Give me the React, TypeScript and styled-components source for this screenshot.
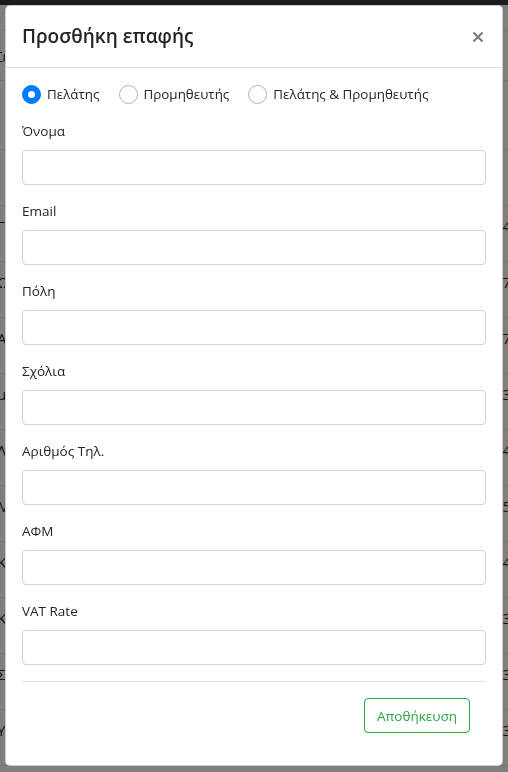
import React, { useState } from 'react';
import styled, { createGlobalStyle } from 'styled-components';

const GlobalStyle = createGlobalStyle`
  html, body {
    margin: 0;
    padding: 0;
    background: #fff;
    font-family: "Open Sans", "Noto Sans", sans-serif;
    color: #212529;
    overflow: hidden;
  }
  * { box-sizing: border-box; }
`;

const Page = styled.div`
  width: 508px;
  height: 772px;
  overflow: hidden;
  position: relative;
`;

const TopBar = styled.div`
  height: 5px;
  background: #343a40;
`;

const PageHead = styled.div`
  height: 51px;
  border-top: 1px solid #dee2e6;
  border-bottom: 1px solid #dee2e6;
  margin-top: 25px;
  display: flex;
  align-items: center;
  font-size: 15px;
  margin-left: -6px;
`;

const Table = styled.div`
  display: flex;
  flex-direction: column;
  margin-top: 68px;
  border-top: 1px solid #dee2e6;
`;

const Row = styled.div`
  height: 56px;
  border-bottom: 1px solid #dee2e6;
  display: flex;
  align-items: flex-start;
  justify-content: space-between;
  padding-top: 10px;
  font-size: 15px;
  line-height: 21px;
  color: #212529;
  margin-left: -3px;
  margin-right: -3px;
`;

const Backdrop = styled.div`
  position: fixed;
  inset: 0;
  background: rgba(0, 0, 0, 0.5);
`;

const Modal = styled.div`
  position: fixed;
  top: 5px;
  left: 5px;
  width: 498px;
  background: #fff;
  border: 1px solid rgba(0, 0, 0, 0.2);
  border-radius: 5px;
  display: flex;
  flex-direction: column;
`;

const Header = styled.div`
  display: flex;
  align-items: center;
  justify-content: space-between;
  padding: 16px;
  border-bottom: 1px solid #dee2e6;
`;

const Title = styled.h5`
  margin: 0;
  font-size: 19px;
  line-height: 29px;
  font-weight: 600;
  color: #212529;
`;

const Close = styled.button`
  border: 0;
  background: transparent;
  padding: 0;
  width: 16px;
  height: 16px;
  display: flex;
  align-items: center;
  justify-content: center;
  cursor: pointer;
`;

const Body = styled.div`
  padding: 16px;
`;

const RadioRow = styled.div`
  display: flex;
  align-items: center;
  gap: 19px;
  margin-bottom: 16px;
  height: 21px;
`;

const RadioLabel = styled.label`
  display: flex;
  align-items: center;
  gap: 6px;
  font-size: 13.4px;
  line-height: 21px;
  cursor: pointer;
`;

const RadioDot = styled.span<{ $checked: boolean }>`
  width: 19px;
  height: 19px;
  border-radius: 50%;
  flex: none;
  background: ${(p) => (p.$checked ? '#007bff' : '#fff')};
  border: 1px solid ${(p) => (p.$checked ? '#007bff' : '#adb5bd')};
  display: flex;
  align-items: center;
  justify-content: center;
  &::after {
    content: '';
    width: 7px;
    height: 7px;
    border-radius: 50%;
    background: ${(p) => (p.$checked ? '#fff' : 'transparent')};
  }
`;

const Group = styled.div`
  margin-bottom: 16px;
`;

const Label = styled.label`
  display: block;
  font-size: 13.5px;
  line-height: 21px;
  margin-bottom: 8px;
`;

const Input = styled.input`
  display: block;
  width: 100%;
  height: 35px;
  padding: 6px 12px;
  font-size: 14px;
  border: 1px solid #ced4da;
  border-radius: 4px;
  font-family: inherit;
  color: #495057;
  outline: none;
`;

const Footer = styled.div`
  display: flex;
  justify-content: flex-end;
  padding: 16px;
  border-top: 1px solid #dee2e6;
`;

const OutlineButton = styled.button`
  height: 35px;
  padding: 0 12px;
  font-family: inherit;
  font-size: 13.5px;
  color: #28a745;
  background: #fff;
  border: 1px solid #28a745;
  border-radius: 4px;
  cursor: pointer;
`;

const rows: [string, string][] = [
  ['', 'l'],
  ['Γ', '4'],
  ['Ω', '7'],
  ['Α', '7'],
  ['μ', '3'],
  ['Λ', '4'],
  ['Μ', '5'],
  ['Κ', '4'],
  ['Κ', '3'],
  ['Σ', '3'],
  ['Υ', '3'],
];

const fields = ['Όνομα', 'Email', 'Πόλη', 'Σχόλια', 'Αριθμός Τηλ.', 'ΑΦΜ', 'VAT Rate'];
const types = ['Πελάτης', 'Προμηθευτής', 'Πελάτης & Προμηθευτής'];

export default function App() {
  const [type, setType] = useState(0);

  return (
    <Page>
      <GlobalStyle />
      <TopBar />
      <PageHead>Σε</PageHead>
      <Table>
        {rows.map(([a, b], i) => (
          <Row key={i}>
            <span>{a}</span>
            <span>{b}</span>
          </Row>
        ))}
      </Table>
      <Backdrop />
      <Modal>
        <Header>
          <Title>Προσθήκη επαφής</Title>
          <Close aria-label="Close">
            <svg width="12" height="12" viewBox="0 0 12 12">
              <path d="M1.5 1.5 L10.5 10.5 M10.5 1.5 L1.5 10.5" stroke="#7d7d7d" strokeWidth="2.2" />
            </svg>
          </Close>
        </Header>
        <Body>
          <RadioRow>
            {types.map((t, i) => (
              <RadioLabel key={t} onClick={() => setType(i)}>
                <RadioDot $checked={type === i} />
                {t}
              </RadioLabel>
            ))}
          </RadioRow>
          {fields.map((f) => (
            <Group key={f}>
              <Label>{f}</Label>
              <Input type="text" />
            </Group>
          ))}
          <Footer>
            <OutlineButton>Αποθήκευση</OutlineButton>
          </Footer>
        </Body>
      </Modal>
    </Page>
  );
}
